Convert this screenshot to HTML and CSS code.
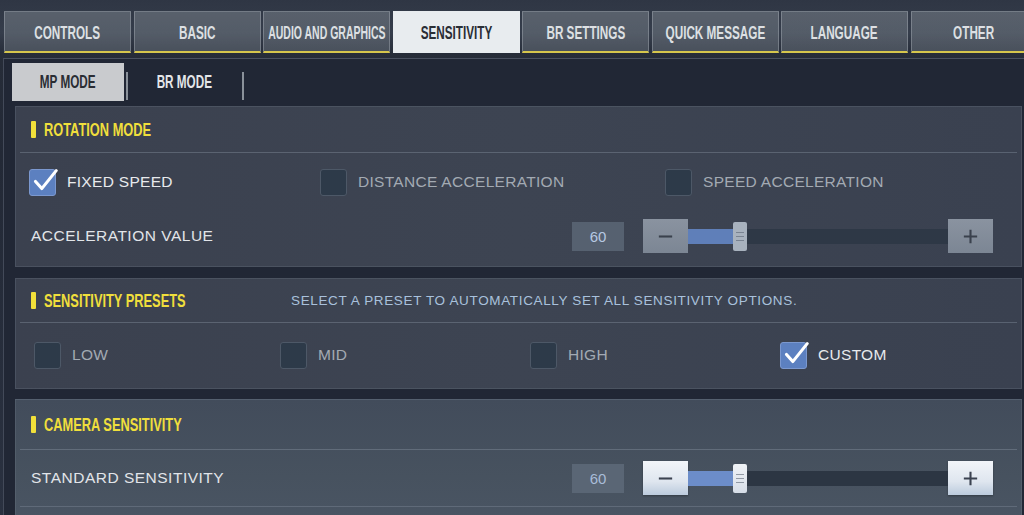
FILE: index.html
```html
<!DOCTYPE html>
<html>
<head>
<meta charset="utf-8">
<link rel="stylesheet" href="styles.css">
</head>
<body>
<div class="screen">
  <nav class="tabs">
    <div class="tab"><span class="cond">CONTROLS</span></div>
    <div class="tab"><span class="cond">BASIC</span></div>
    <div class="tab tab-long"><span class="cond">AUDIO AND GRAPHICS</span></div>
    <div class="tab active"><span class="cond">SENSITIVITY</span></div>
    <div class="tab"><span class="cond">BR SETTINGS</span></div>
    <div class="tab"><span class="cond">QUICK MESSAGE</span></div>
    <div class="tab"><span class="cond">LANGUAGE</span></div>
    <div class="tab"><span class="cond">OTHER</span></div>
  </nav>
  <div class="frame">
    <div class="subtabs">
      <div class="subtab active"><span class="cond">MP MODE</span></div>
      <div class="sep"></div>
      <div class="subtab"><span class="cond">BR MODE</span></div>
      <div class="sep"></div>
    </div>
    <div class="content">
      <section class="section s1">
        <div class="sec-head"><span class="bar"></span><h2><span class="cond">ROTATION MODE</span></h2></div>
        <div class="opts opts3">
          <label class="opt on"><span class="box"><svg viewBox="0 0 30 30" class="tick"><path d="M5 16 L12 24 L28 4"/></svg></span>FIXED SPEED</label>
          <label class="opt"><span class="box"></span>DISTANCE ACCELERATION</label>
          <label class="opt"><span class="box"></span>SPEED ACCELERATION</label>
        </div>
        <div class="slider-row">
          <span class="label">ACCELERATION VALUE</span>
          <div class="slider muted">
            <span class="val">60</span>
            <span class="btn minus"><svg viewBox="0 0 20 20"><path d="M3 10 H17"/></svg></span>
            <span class="track"><span class="fill" style="width:45px"></span><span class="thumb"><i></i><i></i><i></i></span></span>
            <span class="btn plus"><svg viewBox="0 0 20 20"><path d="M3 10 H17 M10 3 V17"/></svg></span>
          </div>
        </div>
      </section>
      <section class="section s2">
        <div class="sec-head"><span class="bar"></span><h2 class="h2-fixed"><span class="cond">SENSITIVITY PRESETS</span></h2><p class="desc">SELECT A PRESET TO AUTOMATICALLY SET ALL SENSITIVITY OPTIONS.</p></div>
        <div class="opts opts4">
          <label class="opt"><span class="box"></span>LOW</label>
          <label class="opt"><span class="box"></span>MID</label>
          <label class="opt"><span class="box"></span>HIGH</label>
          <label class="opt on"><span class="box"><svg viewBox="0 0 30 30" class="tick"><path d="M5 16 L12 24 L28 4"/></svg></span>CUSTOM</label>
        </div>
      </section>
      <section class="section s3">
        <div class="sec-head"><span class="bar"></span><h2><span class="cond">CAMERA SENSITIVITY</span></h2></div>
        <div class="slider-row">
          <span class="label">STANDARD SENSITIVITY</span>
          <div class="slider bright">
            <span class="val">60</span>
            <span class="btn minus"><svg viewBox="0 0 20 20"><path d="M3 10 H17"/></svg></span>
            <span class="track"><span class="fill" style="width:45px"></span><span class="thumb"><i></i><i></i><i></i></span></span>
            <span class="btn plus"><svg viewBox="0 0 20 20"><path d="M3 10 H17 M10 3 V17"/></svg></span>
          </div>
        </div>
      </section>
    </div>
  </div>
</div>
</body>
</html>
```
FILE: styles.css
```css
* { box-sizing: border-box; margin: 0; padding: 0; }
html, body { width: 1024px; height: 515px; overflow: hidden; }
body {
  background: linear-gradient(180deg, #2e3542 0%, #262c38 12%, #232936 30%, #2a3140 100%);
  font-family: "Liberation Sans", Arial, sans-serif;
  color: #e6e9ec;
}
.screen { width: 1024px; height: 515px; overflow: hidden; }

.cond {
  display: inline-block;
  font-family: "Liberation Sans", Arial, sans-serif;
  font-weight: bold;
  transform: scaleX(0.7);
  white-space: nowrap;
}

.tabs {
  display: flex;
  gap: 2.5px;
  padding: 11px 0 0 4px;
  height: 55px;
  white-space: nowrap;
  background: linear-gradient(180deg, #2f3644 0%, #353d4b 60%, #262c38 100%);
}
.tab {
  flex: 0 0 127px;
  min-width: 0;
  height: 42px;
  padding-top: 3px;
  display: flex;
  align-items: center;
  justify-content: center;
  font-size: 17.5px;
  color: #dde0e3;
  background: linear-gradient(180deg, rgba(120,128,138,0.55), rgba(100,108,118,0.55));
  border: 1px solid rgba(190,196,204,0.35);
  border-bottom: 2px solid #d6c64c;
  overflow: visible;
}
.tab .cond { transform: scaleX(0.67); }
.tab-long .cond { transform: scaleX(0.6); }
.tab.active {
  background: #e8ecef;
  color: #2a2e35;
  border-color: #e8ecef;
}

.frame {
  margin: 3px 0 0 3px;
  border-top: 1px solid rgba(170,180,195,0.3);
  border-left: 1px solid rgba(170,180,195,0.25);
  background: #212735;
  height: 460px;
}
.subtabs {
  display: flex;
  align-items: center;
  height: 43px;
  padding: 3px 0 0 8px;
}
.subtab {
  width: 112px;
  height: 38px;
  display: flex;
  align-items: center;
  justify-content: center;
  font-size: 17.5px;
  color: #e4e6e9;
}
.subtab .cond { transform: scaleX(0.67); }
.subtab.active { background: #c9cbce; color: #2a2d33; }
.sep { width: 2px; height: 28px; margin-top: 8px; background: #8a919a; margin-left: 2px; }

.content {
  padding: 4px 2px 0 11px;
  display: flex;
  flex-direction: column;
}
.section {
  background: linear-gradient(90deg, #3b414f 0%, #3d4452 50%, #3a4150 100%);
  border: 1px solid rgba(120,130,145,0.25);
}
.s1 { height: 161px; }
.s2 { height: 111px; margin-top: 11px; }
.s3 { height: 130px; margin-top: 10px; background: linear-gradient(180deg, #424c5b 0%, #47525f 60%, #4a5564 100%); }

.sec-head {
  height: 46px;
  margin: 0 4px;
  border-bottom: 1px solid rgba(150,160,175,0.35);
  display: flex;
  align-items: center;
  padding-left: 11px;
}
.s2 .sec-head { height: 44px; }
.s3 .sec-head { height: 50px; }
.bar { width: 5px; height: 17px; background: #f1e03a; border-radius: 1px; flex: 0 0 5px; }
h2 {
  margin-left: 8px;
  font-size: 19px;
  font-weight: bold;
  color: #f0df3c;
  line-height: 1;
}
h2 .cond { transform: scaleX(0.675); transform-origin: left center; }
.h2-fixed { width: 247px; flex: 0 0 247px; }
.desc {
  font-size: 13.5px;
  color: #a9c1dc;
  letter-spacing: 0.65px;
  white-space: nowrap;
}

.opts { display: grid; align-items: center; }
.opts3 { grid-template-columns: 291px 345px 1fr; height: 58px; padding-left: 13px; }
.opts4 { grid-template-columns: 246px 250px 250px 1fr; height: 64px; padding-left: 18px; }
.opt {
  display: flex;
  align-items: center;
  font-size: 15.5px;
  color: #a3aab3;
  letter-spacing: 0.3px;
}
.opt.on { color: #e8eaed; }
.box {
  position: relative;
  width: 27px;
  height: 27px;
  margin-right: 11px;
  border-radius: 3px;
  background: #2d3a49;
  border: 1px solid #4d5867;
  flex: 0 0 27px;
}
.opt.on .box { background: #5c80c0; border-color: #7b98cf; }
.tick {
  position: absolute;
  left: 1px;
  top: -3px;
  width: 27px;
  height: 27px;
  fill: none;
  stroke: #ffffff;
  stroke-width: 3.4;
  stroke-linecap: round;
  stroke-linejoin: round;
}

.slider-row {
  display: flex;
  align-items: center;
  justify-content: space-between;
  padding: 0 28px 0 15px;
}
.s1 .slider-row { height: 50px; }
.s3 .slider-row { height: 57px; margin: 0 4px; padding: 0 24px 0 11px; border-bottom: 1px solid rgba(150,160,175,0.3); }
.label { font-size: 15.5px; letter-spacing: 0.5px; color: #e2e5e9; }
.slider { display: flex; align-items: center; }
.val {
  width: 52px;
  height: 29px;
  display: flex;
  align-items: center;
  justify-content: center;
  font-size: 15px;
  color: #b7c8e2;
  background: #566170;
  margin-right: 19px;
}
.bright .val { background: #5a6675; color: #a9bcd8; }
.btn {
  width: 45px;
  height: 34px;
  display: flex;
  align-items: center;
  justify-content: center;
}
.btn svg { width: 19px; height: 19px; fill: none; stroke: #3b4250; stroke-width: 2.2; }
.muted .btn { background: linear-gradient(180deg, #8a93a0, #7c8694); }
.muted .btn svg { stroke: #3a414d; }
.bright .btn { background: linear-gradient(180deg, #f2f5f9 0%, #dfe6ef 60%, #bccbdd 100%); box-shadow: 0 1px 2px rgba(0,0,0,0.3); }
.track {
  position: relative;
  width: 260px;
  height: 15px;
  background: #2e3846;
  display: flex;
  align-items: center;
}
.bright .track { background: #2c3643; }
.fill { height: 15px; background: #5f7fb9; }
.bright .fill { background: #6c8dc9; }
.thumb {
  width: 14px;
  height: 29px;
  background: #a8b2be;
  border-radius: 2px;
  display: flex;
  flex-direction: column;
  align-items: center;
  justify-content: center;
  gap: 3px;
}
.bright .thumb { background: linear-gradient(180deg, #f0f3f7, #d6dde7); }
.thumb i { display: block; width: 8px; height: 1px; background: rgba(90,100,115,0.6); }
```
